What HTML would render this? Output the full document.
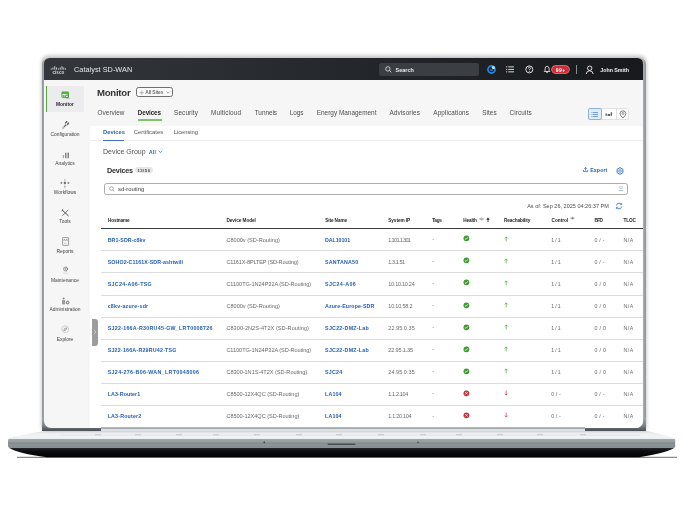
<!DOCTYPE html>
<html><head><meta charset="utf-8"><style>
html,body{margin:0;padding:0;}
body{width:684px;height:513px;background:#fff;position:relative;overflow:hidden;font-family:"Liberation Sans",sans-serif;}
.a{position:absolute;}
.t{position:absolute;white-space:nowrap;line-height:10px;height:10px;}
#scr{will-change:transform;}
svg{position:absolute;overflow:visible;}
</style></head><body>

<svg style="left:0;top:0" width="684" height="513" viewBox="0 0 684 513">
<defs>
<linearGradient id="gblack" x1="0" y1="0" x2="0" y2="1"><stop offset="0" stop-color="#2a2e30"/><stop offset="0.35" stop-color="#0c0e0f"/><stop offset="1" stop-color="#000"/></linearGradient>
<linearGradient id="gmid" x1="0" y1="0" x2="0" y2="1"><stop offset="0" stop-color="#a3a9ad"/><stop offset="0.5" stop-color="#8f969a"/><stop offset="1" stop-color="#858c90"/></linearGradient>
<linearGradient id="gtop" x1="0" y1="0" x2="0" y2="1"><stop offset="0" stop-color="#d7dadc"/><stop offset="0.3" stop-color="#eceef0"/><stop offset="1" stop-color="#f3f5f6"/></linearGradient>
</defs>
<path d="M17 457.3 L677 457.3" stroke="#333" stroke-width="0.9" opacity="0.8"/>
<path d="M8.5 447.4 L674.5 447.4 Q670 452 639 457.2 L47 457.2 Q18 453.5 8.5 447.4 Z" fill="url(#gblack)"/>
<path d="M10 438.6 L673.5 438.6 Q675.2 438.8 675.2 440.6 L675.2 446 Q675.2 447.8 673.5 447.8 L10 447.8 Q8 447.8 8 446 L8 440.6 Q8 438.6 10 438.6 Z" fill="url(#gmid)"/>
<path d="M8 443.3 L675 443.3" stroke="#7d8488" stroke-width="0.7"/>
<path d="M8 438.8 Q10 436.5 45 431 L647 431 Q672 436.5 675 438.8 Z" fill="url(#gtop)"/>
<circle cx="264.3" cy="442.3" r="0.9" fill="#3a3e41"/>
<circle cx="418" cy="442.3" r="0.8" fill="#3a3e41"/>
<rect x="327.5" y="443.5" width="28" height="1.4" rx="0.7" fill="#4a4f52"/>
</svg>

<div class="a" style="left:42px;top:58px;width:603.8px;height:373.1px;border-radius:6px 6px 0 0;background:linear-gradient(90deg,#8e9397,#a9aeb2 0.5%,#a9aeb2 99.5%,#8e9397);box-shadow:0 -2px 4px rgba(0,0,0,0.28);"></div>
<div class="a" style="left:41.5px;top:418px;width:604.5px;height:13.1px;background:linear-gradient(#a4a9ad,#7a7f83 60%,#4a4e51);"></div>
<div class="a" id="scr" style="left:44px;top:58px;width:598.7px;height:369.5px;border-radius:5.5px 5.5px 7px 7px;overflow:hidden;background:#f6f6f6;">
<div class="a" style="left:-44px;top:-58px;width:684px;height:513px;">
<div class="a" style="left:44px;top:58px;width:599px;height:21.6px;background:linear-gradient(90deg,#33373b,#24272b 50%,#17191c);"></div>
<div class="a" style="left:90.2px;top:125.6px;width:553px;height:302px;background:#fff;"></div>
<svg style="left:50px;top:65px" width="18" height="10" viewBox="0 0 18 10"><rect x="0.75" y="3.40" width="0.9" height="1.30" fill="#d4d6d8"/><rect x="2.55" y="2.40" width="0.9" height="2.30" fill="#d4d6d8"/><rect x="4.35" y="1.20" width="0.9" height="3.50" fill="#d4d6d8"/><rect x="6.15" y="2.40" width="0.9" height="2.30" fill="#d4d6d8"/><rect x="7.95" y="3.40" width="0.9" height="1.30" fill="#d4d6d8"/><rect x="9.75" y="2.40" width="0.9" height="2.30" fill="#d4d6d8"/><rect x="11.55" y="1.20" width="0.9" height="3.50" fill="#d4d6d8"/><rect x="13.35" y="2.40" width="0.9" height="2.30" fill="#d4d6d8"/><rect x="15.15" y="3.40" width="0.9" height="1.30" fill="#d4d6d8"/><text x="8.4" y="8.9" font-size="4.5" font-weight="bold" fill="#d4d6d8" text-anchor="middle" font-family="Liberation Sans" letter-spacing="0.1">cisco</text></svg>
<div class="t" style="left:74.00px;top:65.40px;font-size:7.3px;color:#e6e7e8;letter-spacing:0.034px;">Catalyst SD-WAN</div>
<div class="a" style="left:378.7px;top:63.1px;width:100.7px;height:12.9px;border-radius:2.5px;background:#3b3f44;"></div>
<svg style="left:384.5px;top:66px" width="7" height="7" viewBox="0 0 7 7"><circle cx="2.9" cy="2.9" r="2.2" fill="none" stroke="#e8e8e8" stroke-width="0.8"/><path d="M4.5 4.5 L6.3 6.3" stroke="#e8e8e8" stroke-width="0.8"/></svg>
<div class="t" style="left:395.50px;top:65.10px;font-size:5.5px;color:#e9eaeb;font-weight:bold;letter-spacing:0.011px;">Search</div>
<svg style="left:486.5px;top:65px" width="9" height="9" viewBox="0 0 9 9"><circle cx="4.5" cy="4.5" r="3.6" fill="none" stroke="#1f8fe8" stroke-width="1.6"/><circle cx="6.4" cy="2.6" r="1.6" fill="#bfe4ff"/><path d="M3 4.5 a1.5 1.5 0 0 0 3 0" fill="#1f8fe8"/></svg>
<svg style="left:505.5px;top:66px" width="9" height="7" viewBox="0 0 9 7"><rect x="0" y="0.4" width="1.2" height="0.9" fill="#e8e8e8"/><rect x="2.2" y="0.4" width="5.8" height="0.9" fill="#e8e8e8"/><rect x="0" y="2.9" width="1.2" height="0.9" fill="#e8e8e8"/><rect x="2.2" y="2.9" width="5.8" height="0.9" fill="#e8e8e8"/><rect x="0" y="5.4" width="1.2" height="0.9" fill="#e8e8e8"/><rect x="2.2" y="5.4" width="5.8" height="0.9" fill="#e8e8e8"/></svg>
<svg style="left:524.5px;top:65px" width="9" height="9" viewBox="0 0 9 9"><circle cx="4.3" cy="4.4" r="3.5" fill="none" stroke="#ececec" stroke-width="0.9"/><path d="M3.2 3.5 Q3.3 2.3 4.4 2.3 Q5.5 2.4 5.5 3.4 Q5.4 4.2 4.4 4.6 L4.4 5.3" fill="none" stroke="#ececec" stroke-width="0.8"/><circle cx="4.4" cy="6.4" r="0.5" fill="#ececec"/></svg>
<svg style="left:543px;top:65px" width="9" height="9" viewBox="0 0 9 9"><path d="M1.3 6.5 L2.1 5.5 L2.1 3.8 Q2.2 1.3 4.1 1.2 Q6.0 1.3 6.1 3.8 L6.1 5.5 L6.9 6.5 Z" fill="none" stroke="#f0f0f0" stroke-width="0.85" stroke-linejoin="round"/><path d="M3.3 7.4 Q4.1 8.3 4.9 7.4" fill="none" stroke="#f0f0f0" stroke-width="0.8"/></svg>
<div class="a" style="left:552.2px;top:65.6px;width:16.8px;height:7.8px;border-radius:4px;background:#cf2d38;box-shadow:0 0 0 0.7px #f08a8f;"></div>
<div class="t" style="left:555.80px;top:65.30px;font-size:5.0px;color:#fff;font-weight:bold;letter-spacing:0.459px;">99+</div>
<div class="a" style="left:575.6px;top:64.5px;width:0.9px;height:9.5px;background:#8b8e91;"></div>
<svg style="left:584.5px;top:64.5px" width="10" height="10" viewBox="0 0 10 10"><circle cx="4.7" cy="3.2" r="2.2" fill="none" stroke="#f0f0f0" stroke-width="0.9"/><path d="M1.2 9 Q1.6 5.8 4.7 5.8 Q7.8 5.8 8.2 9" fill="none" stroke="#f0f0f0" stroke-width="0.9"/></svg>
<div class="t" style="left:600.30px;top:64.80px;font-size:5.3px;color:#f2f2f2;font-weight:bold;letter-spacing:-0.017px;">John Smith</div>
<div class="a" style="left:45.6px;top:86.4px;width:38.3px;height:25.2px;background:#ececee;"></div>
<div class="a" style="left:45.6px;top:86.4px;width:1.4px;height:25.2px;background:#58a83a;"></div>
<div class="t" style="left:56.02px;top:100.40px;font-size:4.9px;color:#2a2a2a;font-weight:bold;">Monitor</div>
<div class="t" style="left:50.43px;top:129.67px;font-size:4.9px;color:#3f3f3f;">Configuration</div>
<div class="t" style="left:55.20px;top:158.94px;font-size:4.9px;color:#3f3f3f;">Analytics</div>
<div class="t" style="left:53.75px;top:188.21px;font-size:4.9px;color:#3f3f3f;">Workflows</div>
<div class="t" style="left:59.28px;top:217.48px;font-size:4.9px;color:#3f3f3f;">Tools</div>
<div class="t" style="left:56.42px;top:246.75px;font-size:4.9px;color:#3f3f3f;">Reports</div>
<div class="t" style="left:50.97px;top:276.02px;font-size:4.9px;color:#3f3f3f;">Maintenance</div>
<div class="t" style="left:49.48px;top:305.29px;font-size:4.9px;color:#3f3f3f;">Administration</div>
<div class="t" style="left:56.69px;top:334.56px;font-size:4.9px;color:#3f3f3f;">Explore</div>
<svg style="left:60.5px;top:91px" width="10" height="9" viewBox="0 0 10 9"><rect x="0.9" y="1" width="6.6" height="5.6" rx="0.4" fill="none" stroke="#4db03a" stroke-width="1"/><rect x="0.9" y="0.9" width="6.6" height="2" fill="#4db03a"/><rect x="1.6" y="4" width="2" height="2" fill="#66c24f"/><circle cx="6" cy="5.4" r="1.5" fill="#e9e9ea" stroke="#2f7f25" stroke-width="0.9"/><path d="M7 6.5 L8.1 7.6" stroke="#2f7f25" stroke-width="0.9"/></svg>
<svg style="left:60.5px;top:119.8px" width="10" height="10" viewBox="0 0 10 10"><path d="M2.2 7.6 L5.2 4.6" stroke="#555" stroke-width="1.1"/><path d="M4.4 3.6 Q4.2 1.6 6 1.3 L5.6 2.6 L6.6 3.4 L7.8 2.8 Q7.8 4.8 5.6 5" fill="none" stroke="#4a4a4a" stroke-width="0.9"/><circle cx="2.1" cy="8" r="1.2" fill="#c4c4c4"/></svg>
<svg style="left:61.5px;top:151.8px" width="8" height="7" viewBox="0 0 8 7"><rect x="0.8" y="3" width="1.1" height="3.2" fill="#a0a0a0"/><rect x="3.2" y="0.8" width="1.2" height="5.4" fill="#666"/><rect x="5.6" y="0.6" width="1.2" height="5.6" fill="#666"/></svg>
<svg style="left:60.3px;top:179px" width="10" height="9" viewBox="0 0 10 9"><circle cx="4.9" cy="0.9" r="0.6" fill="#888"/><path d="M4.9 2.2 L6.3 3.9 L4.9 5.6 L3.5 3.9 Z" fill="#666"/><path d="M0.4 3.9 L2.4 3.9 M1.4 2.9 L1.4 4.9 M7.4 3.9 L9.4 3.9 M8.4 2.9 L8.4 4.9" stroke="#666" stroke-width="0.7"/><path d="M4.9 6.4 L4.9 7.8" stroke="#999" stroke-width="0.6"/><circle cx="4.9" cy="7.9" r="0.6" fill="#777"/></svg>
<svg style="left:61px;top:208.5px" width="9" height="8" viewBox="0 0 9 8"><path d="M1.2 1 L7.6 7" stroke="#4a4a4a" stroke-width="1"/><path d="M7.4 0.8 L1.4 6.8" stroke="#6a6a6a" stroke-width="0.9"/><path d="M0.6 1.8 L2.2 0.4" stroke="#4a4a4a" stroke-width="1"/></svg>
<svg style="left:61.6px;top:237px" width="8" height="9" viewBox="0 0 8 9"><rect x="0.6" y="0.6" width="6" height="7.8" rx="0.5" fill="none" stroke="#888" stroke-width="0.8"/><path d="M2 4 L2 2.2 L3.6 3.4 L5.2 2.2 L5.2 4" fill="none" stroke="#777" stroke-width="0.6"/><path d="M2 6.2 L5.2 6.2" stroke="#aaa" stroke-width="0.5"/></svg>
<svg style="left:61.5px;top:265.5px" width="8" height="9" viewBox="0 0 8 9"><circle cx="3.6" cy="3" r="1.9" fill="none" stroke="#777" stroke-width="1.1" stroke-dasharray="1 0.4"/><circle cx="3.6" cy="3" r="0.7" fill="#777"/><path d="M1 7.2 L6.2 7.2" stroke="#c8c8c8" stroke-width="0.6"/></svg>
<svg style="left:60.5px;top:296.5px" width="10" height="9" viewBox="0 0 10 9"><circle cx="2.6" cy="1.5" r="1" fill="#888"/><path d="M1.1 3.1 L4.1 3.1 L4.1 7.4 L1.1 7.4 Z" fill="#999"/><circle cx="6.6" cy="5.6" r="1.3" fill="none" stroke="#555" stroke-width="0.9"/></svg>
<svg style="left:60.8px;top:324.8px" width="9" height="9" viewBox="0 0 9 9"><circle cx="4.2" cy="4.2" r="3.4" fill="none" stroke="#b8b8b8" stroke-width="0.6"/><path d="M2.8 5.8 L3.5 3.5 L5.8 2.8 L5 5 Z" fill="none" stroke="#777" stroke-width="0.6"/></svg>
<div class="a" style="left:91.7px;top:318.6px;width:6.8px;height:27.3px;border-radius:0 3px 3px 0;background:#9d9d9d;"></div>
<svg style="left:93px;top:329px" width="4" height="6" viewBox="0 0 4 6"><path d="M1 0.8 L3 3 L1 5.2" fill="none" stroke="#e0e0e0" stroke-width="0.6"/></svg>
<div class="t" style="left:96.90px;top:87.50px;font-size:9.6px;color:#333;font-weight:bold;letter-spacing:-0.232px;">Monitor</div>
<div class="a" style="left:135.5px;top:87.4px;width:37.9px;height:10.1px;box-sizing:border-box;border:0.8px solid #6e6e6e;border-radius:2.5px;background:#fafafa;"></div>
<svg style="left:138.8px;top:89.8px" width="6" height="6" viewBox="0 0 6 6"><path d="M0.6 2.7 L4.8 2.7 M2.7 0.6 L2.7 4.8" stroke="#9a9a9a" stroke-width="0.7"/></svg>
<div class="t" style="left:145.30px;top:88.30px;font-size:4.9px;color:#4a4a4a;letter-spacing:-0.150px;font-weight:bold;opacity:0.8;">All Sites</div>
<svg style="left:165.5px;top:91px" width="4" height="3" viewBox="0 0 4 3"><path d="M0.4 0.6 L2 2.2 L3.6 0.6" fill="none" stroke="#666" stroke-width="0.6"/></svg>
<div class="t" style="left:97.60px;top:107.80px;font-size:6.4px;color:#4d4d4d;letter-spacing:0.033px;">Overview</div>
<div class="t" style="left:137.80px;top:107.80px;font-size:6.3px;color:#262626;font-weight:bold;letter-spacing:-0.103px;">Devices</div>
<div class="t" style="left:174.00px;top:107.80px;font-size:6.4px;color:#4d4d4d;letter-spacing:0.126px;">Security</div>
<div class="t" style="left:211.00px;top:107.80px;font-size:6.4px;color:#4d4d4d;letter-spacing:0.132px;">Multicloud</div>
<div class="t" style="left:254.75px;top:107.80px;font-size:6.4px;color:#4d4d4d;letter-spacing:-0.047px;">Tunnels</div>
<div class="t" style="left:289.75px;top:107.80px;font-size:6.4px;color:#4d4d4d;letter-spacing:-0.043px;">Logs</div>
<div class="t" style="left:316.75px;top:107.80px;font-size:6.4px;color:#4d4d4d;letter-spacing:0.021px;">Energy Management</div>
<div class="t" style="left:389.50px;top:107.80px;font-size:6.4px;color:#4d4d4d;letter-spacing:0.109px;">Advisories</div>
<div class="t" style="left:433.25px;top:107.80px;font-size:6.4px;color:#4d4d4d;letter-spacing:0.113px;">Applications</div>
<div class="t" style="left:482.20px;top:107.80px;font-size:6.4px;color:#4d4d4d;letter-spacing:0.068px;">Sites</div>
<div class="t" style="left:509.40px;top:107.80px;font-size:6.4px;color:#4d4d4d;letter-spacing:0.152px;">Circuits</div>
<div class="a" style="left:137.5px;top:119.4px;width:24.5px;height:1.4px;background:#7fc26a;"></div>
<div class="a" style="left:587.5px;top:108px;width:41.5px;height:12.4px;box-sizing:border-box;border:0.7px solid #e2e2e2;border-radius:2px;background:#fff;"></div>
<div class="a" style="left:587.5px;top:108px;width:14.6px;height:12.4px;box-sizing:border-box;border:0.9px solid #8fb3e0;border-radius:2px;background:#e2ecf9;"></div>
<div class="a" style="left:615.5px;top:108px;width:0.6px;height:12px;background:#e0e0e0;"></div>
<svg style="left:590.5px;top:110.5px" width="8" height="7" viewBox="0 0 8 7"><rect x="0.5" y="1" width="0.9" height="0.8" fill="#5b8fd6"/><rect x="2" y="1" width="5" height="0.8" fill="#5b8fd6"/><rect x="0.5" y="3" width="0.9" height="0.8" fill="#5b8fd6"/><rect x="2" y="3" width="5" height="0.8" fill="#5b8fd6"/><rect x="0.5" y="5" width="0.9" height="0.8" fill="#5b8fd6"/><rect x="2" y="5" width="5" height="0.8" fill="#5b8fd6"/></svg>
<svg style="left:604.5px;top:109.7px" width="8" height="7" viewBox="0 0 8 7"><rect x="0.6" y="3.4" width="1.1" height="2.4" fill="#444"/><rect x="2.6" y="4.1" width="2.6" height="1.7" fill="#444"/><rect x="5.8" y="2.2" width="1.1" height="3.6" fill="#444"/></svg>
<svg style="left:618.5px;top:109.8px" width="8" height="9" viewBox="0 0 8 9"><path d="M3.9 8 Q1 5.6 1 3.5 Q1 0.9 3.9 0.9 Q6.8 0.9 6.8 3.5 Q6.8 5.6 3.9 8 Z" fill="none" stroke="#555" stroke-width="0.75"/><circle cx="3.9" cy="3.5" r="1" fill="none" stroke="#555" stroke-width="0.6"/></svg>
<div class="t" style="left:103.00px;top:127.30px;font-size:5.85px;color:#2b64b4;letter-spacing:-0.018px;font-weight:600;">Devices</div>
<div class="t" style="left:133.70px;top:127.30px;font-size:5.85px;color:#555;letter-spacing:0.022px;">Certificates</div>
<div class="t" style="left:173.70px;top:127.30px;font-size:5.85px;color:#555;letter-spacing:-0.052px;">Licensing</div>
<div class="a" style="left:90.2px;top:140.3px;width:553px;height:0.6px;background:#ececec;"></div>
<div class="a" style="left:102.8px;top:139.7px;width:21.2px;height:1.3px;background:#3d72c2;"></div>
<div class="t" style="left:103.00px;top:146.80px;font-size:7.0px;color:#505050;letter-spacing:-0.018px;">Device Group</div>
<div class="t" style="left:148.90px;top:147.40px;font-size:5.0px;color:#2a64b8;font-weight:bold;letter-spacing:0.305px;">All</div>
<svg style="left:157.6px;top:150.2px" width="5" height="4" viewBox="0 0 5 4"><path d="M0.7 0.8 L2.5 2.6 L4.3 0.8" fill="none" stroke="#2a64b8" stroke-width="0.7"/></svg>
<div class="t" style="left:106.90px;top:165.70px;font-size:7.3px;color:#2f2f2f;font-weight:bold;letter-spacing:-0.217px;">Devices</div>
<div class="a" style="left:134.6px;top:166.9px;width:18.4px;height:6.5px;border-radius:3.3px;background:#e6e6e6;"></div>
<div class="t" style="left:137.40px;top:166.00px;font-size:4.2px;color:#444;font-weight:bold;letter-spacing:0.522px;">13/50</div>
<svg style="left:582.6px;top:167.4px" width="6" height="6" viewBox="0 0 6 6"><path d="M2.6 3.8 L2.6 0.6 M1.3 1.8 L2.6 0.5 L3.9 1.8" fill="none" stroke="#2a64b8" stroke-width="0.75"/><path d="M0.5 2.9 L0.5 4.6 L4.7 4.6 L4.7 2.9" fill="none" stroke="#2a64b8" stroke-width="0.75"/></svg>
<div class="t" style="left:590.30px;top:164.60px;font-size:5.3px;color:#2a64b8;font-weight:bold;letter-spacing:0.043px;">Export</div>
<svg style="left:615.5px;top:166.5px" width="8" height="8" viewBox="0 0 8 8"><path d="M4 0.6 L6.9 2.3 L6.9 5.7 L4 7.4 L1.1 5.7 L1.1 2.3 Z" fill="none" stroke="#3b72c4" stroke-width="1"/><circle cx="4" cy="4" r="1.3" fill="none" stroke="#3b72c4" stroke-width="0.8"/></svg>
<div class="a" style="left:103.9px;top:183.2px;width:524px;height:12.1px;box-sizing:border-box;border:0.8px solid #adadad;border-radius:2.5px;background:#fff;"></div>
<svg style="left:108.5px;top:186.2px" width="6" height="6" viewBox="0 0 6 6"><circle cx="2.5" cy="2.5" r="1.8" fill="none" stroke="#777" stroke-width="0.6"/><path d="M3.8 3.8 L5.3 5.3" stroke="#777" stroke-width="0.6"/></svg>
<div class="t" style="left:118.00px;top:184.40px;font-size:5.9px;color:#3c3c3c;">sd-routing</div>
<svg style="left:617.8px;top:186.2px" width="6" height="6" viewBox="0 0 6 6"><path d="M0.8 1 L5 1 M1.7 2.7 L4.2 2.7 M0.8 4.6 L5 4.6" stroke="#6b93d0" stroke-width="0.55"/></svg>
<div class="t" style="left:527.20px;top:200.90px;font-size:5.5px;color:#4a4a4a;letter-spacing:0.019px;">As of: Sep 26, 2025 04:26:37 PM</div>
<svg style="left:615.3px;top:202.2px" width="8" height="8" viewBox="0 0 8 8"><path d="M1.3 3.4 Q1.8 1.1 4 1.1 Q5.6 1.1 6.4 2.4" fill="none" stroke="#2f74d0" stroke-width="0.85"/><path d="M6.6 0.9 L6.6 2.7 L4.9 2.7" fill="none" stroke="#2f74d0" stroke-width="0.75"/><path d="M6.7 4.6 Q6.2 6.9 4 6.9 Q2.4 6.9 1.6 5.6" fill="none" stroke="#2f74d0" stroke-width="0.85"/><path d="M1.4 7.1 L1.4 5.3 L3.1 5.3" fill="none" stroke="#2f74d0" stroke-width="0.75"/></svg>
<div class="t" style="left:108.00px;top:216.20px;font-size:4.7px;color:#1f1f1f;font-weight:bold;letter-spacing:-0.146px;">Hostname</div>
<div class="t" style="left:226.40px;top:216.20px;font-size:4.7px;color:#1f1f1f;font-weight:bold;letter-spacing:-0.040px;">Device Model</div>
<div class="t" style="left:325.30px;top:216.20px;font-size:4.7px;color:#1f1f1f;font-weight:bold;letter-spacing:-0.116px;">Site Name</div>
<div class="t" style="left:388.20px;top:216.20px;font-size:4.7px;color:#1f1f1f;font-weight:bold;letter-spacing:-0.046px;">System IP</div>
<div class="t" style="left:432.20px;top:216.20px;font-size:4.7px;color:#1f1f1f;font-weight:bold;letter-spacing:-0.340px;">Tags</div>
<div class="t" style="left:463.20px;top:216.20px;font-size:4.7px;color:#1f1f1f;font-weight:bold;letter-spacing:-0.133px;">Health</div>
<div class="t" style="left:504.00px;top:216.20px;font-size:4.7px;color:#1f1f1f;font-weight:bold;letter-spacing:-0.108px;">Reachability</div>
<div class="t" style="left:551.50px;top:216.20px;font-size:4.7px;color:#1f1f1f;font-weight:bold;letter-spacing:0.015px;">Control</div>
<div class="t" style="left:594.60px;top:216.20px;font-size:4.7px;color:#1f1f1f;font-weight:bold;letter-spacing:-0.630px;">BFD</div>
<div class="t" style="left:623.60px;top:216.20px;font-size:4.7px;color:#1f1f1f;font-weight:bold;letter-spacing:-0.131px;">TLOC</div>
<svg style="left:479.3px;top:216.6px" width="5" height="4" viewBox="0 0 5 4"><path d="M0.3 2 Q2.5 0 4.7 2 Q2.5 4 0.3 2 Z" fill="none" stroke="#666" stroke-width="0.45"/><circle cx="2.5" cy="2" r="0.6" fill="#666"/></svg>
<svg style="left:486px;top:216.8px" width="4" height="6" viewBox="0 0 4 6"><path d="M2 5 L2 1.6" stroke="#222" stroke-width="0.8"/><path d="M0.3 2.7 L2 0.5 L3.7 2.7 Z" fill="#222"/></svg>
<svg style="left:570px;top:216.4px" width="5" height="5" viewBox="0 0 5 5"><path d="M0.6 2.2 Q2.5 0.3 4.4 2.2 Q2.5 4.1 0.6 2.2 Z" fill="none" stroke="#555" stroke-width="0.45"/><circle cx="2.5" cy="2.2" r="0.6" fill="#555"/></svg>
<div class="a" style="left:101px;top:227.8px;width:542px;height:0.9px;background:#3a3a3a;"></div>
<div class="t" style="left:107.70px;top:235.00px;font-size:5.3px;color:#2560b6;font-weight:bold;letter-spacing:0.072px;">BR1-SDR-c8kv</div>
<div class="t" style="left:226.40px;top:235.00px;font-size:5.6px;color:#6a6a6a;">C8000v (SD-Routing)</div>
<div class="t" style="left:325.10px;top:235.00px;font-size:5.3px;color:#2560b6;font-weight:bold;letter-spacing:-0.076px;">DAL10101</div>
<div class="t" style="left:388.30px;top:235.00px;font-size:5.5px;color:#6a6a6a;letter-spacing:-0.646px;">1.101.1.301</div>
<div class="t" style="left:432.30px;top:234.20px;font-size:5.5px;color:#777;">-</div>
<svg style="left:463.2px;top:235.40px" width="7" height="7" viewBox="0 0 7 7"><circle cx="3.4" cy="3.3" r="2.9" fill="#3d9a2e"/><path d="M1.9 3.4 L3 4.4 L4.9 2.3" fill="none" stroke="#fff" stroke-width="0.8"/></svg>
<svg style="left:504.3px;top:236.00px" width="5" height="6" viewBox="0 0 5 6"><path d="M2.2 5.4 L2.2 1" stroke="#4ea33a" stroke-width="0.7"/><path d="M0.8 2.4 L2.2 0.8 L3.6 2.4" fill="none" stroke="#4ea33a" stroke-width="0.7"/></svg>
<div class="t" style="left:551.20px;top:235.00px;font-size:5.2px;color:#6a6a6a;letter-spacing:-0.155px;">1 / 1</div>
<div class="t" style="left:594.50px;top:235.00px;font-size:5.2px;color:#6a6a6a;letter-spacing:0.236px;">0 / -</div>
<div class="t" style="left:623.40px;top:235.00px;font-size:5.2px;color:#6a6a6a;letter-spacing:0.616px;">N/A</div>
<div class="a" style="left:101px;top:250.26px;width:542px;height:1px;background:#dcdcdc;"></div>
<div class="t" style="left:107.70px;top:257.04px;font-size:5.3px;color:#2560b6;font-weight:bold;letter-spacing:0.086px;">SOHO2-C1161X-SDR-ashtwill</div>
<div class="t" style="left:226.40px;top:257.04px;font-size:5.6px;color:#6a6a6a;letter-spacing:-0.158px;">C1161X-8PLTEP (SD-Routing)</div>
<div class="t" style="left:325.10px;top:257.04px;font-size:5.3px;color:#2560b6;font-weight:bold;letter-spacing:0.211px;">SANTANA50</div>
<div class="t" style="left:388.30px;top:257.04px;font-size:5.5px;color:#6a6a6a;letter-spacing:-0.440px;">1.3.1.51</div>
<div class="t" style="left:432.30px;top:256.24px;font-size:5.5px;color:#777;">-</div>
<svg style="left:463.2px;top:257.44px" width="7" height="7" viewBox="0 0 7 7"><circle cx="3.4" cy="3.3" r="2.9" fill="#3d9a2e"/><path d="M1.9 3.4 L3 4.4 L4.9 2.3" fill="none" stroke="#fff" stroke-width="0.8"/></svg>
<svg style="left:504.3px;top:258.04px" width="5" height="6" viewBox="0 0 5 6"><path d="M2.2 5.4 L2.2 1" stroke="#4ea33a" stroke-width="0.7"/><path d="M0.8 2.4 L2.2 0.8 L3.6 2.4" fill="none" stroke="#4ea33a" stroke-width="0.7"/></svg>
<div class="t" style="left:551.20px;top:257.04px;font-size:5.2px;color:#6a6a6a;letter-spacing:-0.155px;">1 / 1</div>
<div class="t" style="left:594.50px;top:257.04px;font-size:5.2px;color:#6a6a6a;letter-spacing:0.236px;">0 / -</div>
<div class="t" style="left:623.40px;top:257.04px;font-size:5.2px;color:#6a6a6a;letter-spacing:0.616px;">N/A</div>
<div class="a" style="left:101px;top:272.42px;width:542px;height:1px;background:#dcdcdc;"></div>
<div class="t" style="left:107.70px;top:279.08px;font-size:5.3px;color:#2560b6;font-weight:bold;letter-spacing:0.304px;">SJC24-A06-TSG</div>
<div class="t" style="left:226.40px;top:279.08px;font-size:5.6px;color:#6a6a6a;letter-spacing:-0.066px;">C1100TG-1N24P32A (SD-Routing)</div>
<div class="t" style="left:325.10px;top:279.08px;font-size:5.3px;color:#2560b6;font-weight:bold;letter-spacing:0.363px;">SJC24-A06</div>
<div class="t" style="left:388.30px;top:279.08px;font-size:5.5px;color:#6a6a6a;letter-spacing:-0.266px;">10.10.10.24</div>
<div class="t" style="left:432.30px;top:278.28px;font-size:5.5px;color:#777;">-</div>
<svg style="left:463.2px;top:279.48px" width="7" height="7" viewBox="0 0 7 7"><circle cx="3.4" cy="3.3" r="2.9" fill="#3d9a2e"/><path d="M1.9 3.4 L3 4.4 L4.9 2.3" fill="none" stroke="#fff" stroke-width="0.8"/></svg>
<svg style="left:504.3px;top:280.08px" width="5" height="6" viewBox="0 0 5 6"><path d="M2.2 5.4 L2.2 1" stroke="#4ea33a" stroke-width="0.7"/><path d="M0.8 2.4 L2.2 0.8 L3.6 2.4" fill="none" stroke="#4ea33a" stroke-width="0.7"/></svg>
<div class="t" style="left:551.20px;top:279.08px;font-size:5.2px;color:#6a6a6a;letter-spacing:-0.155px;">1 / 1</div>
<div class="t" style="left:594.50px;top:279.08px;font-size:5.2px;color:#6a6a6a;letter-spacing:0.345px;">0 / 0</div>
<div class="t" style="left:623.40px;top:279.08px;font-size:5.2px;color:#6a6a6a;letter-spacing:0.616px;">N/A</div>
<div class="a" style="left:101px;top:294.58px;width:542px;height:1px;background:#dcdcdc;"></div>
<div class="t" style="left:107.70px;top:301.12px;font-size:5.3px;color:#2560b6;font-weight:bold;letter-spacing:0.237px;">c8kv-azure-sdr</div>
<div class="t" style="left:226.40px;top:301.12px;font-size:5.6px;color:#6a6a6a;">C8000v (SD-Routing)</div>
<div class="t" style="left:325.10px;top:301.12px;font-size:5.3px;color:#2560b6;font-weight:bold;letter-spacing:0.100px;">Azure-Europe-SDR</div>
<div class="t" style="left:388.30px;top:301.12px;font-size:5.5px;color:#6a6a6a;letter-spacing:-0.200px;">10.10.58.2</div>
<div class="t" style="left:432.30px;top:300.32px;font-size:5.5px;color:#777;">-</div>
<svg style="left:463.2px;top:301.52px" width="7" height="7" viewBox="0 0 7 7"><circle cx="3.4" cy="3.3" r="2.9" fill="#3d9a2e"/><path d="M1.9 3.4 L3 4.4 L4.9 2.3" fill="none" stroke="#fff" stroke-width="0.8"/></svg>
<svg style="left:504.3px;top:302.12px" width="5" height="6" viewBox="0 0 5 6"><path d="M2.2 5.4 L2.2 1" stroke="#4ea33a" stroke-width="0.7"/><path d="M0.8 2.4 L2.2 0.8 L3.6 2.4" fill="none" stroke="#4ea33a" stroke-width="0.7"/></svg>
<div class="t" style="left:551.20px;top:301.12px;font-size:5.2px;color:#6a6a6a;letter-spacing:-0.155px;">1 / 1</div>
<div class="t" style="left:594.50px;top:301.12px;font-size:5.2px;color:#6a6a6a;letter-spacing:0.345px;">0 / 0</div>
<div class="t" style="left:623.40px;top:301.12px;font-size:5.2px;color:#6a6a6a;letter-spacing:0.616px;">N/A</div>
<div class="a" style="left:101px;top:316.74px;width:542px;height:1px;background:#dcdcdc;"></div>
<div class="t" style="left:107.70px;top:323.16px;font-size:5.3px;color:#2560b6;font-weight:bold;letter-spacing:0.273px;">SJ22-166A-R30RU45-GW_LRT0008726</div>
<div class="t" style="left:226.40px;top:323.16px;font-size:5.6px;color:#6a6a6a;letter-spacing:0.028px;">C8300-2N2S-4T2X (SD-Routing)</div>
<div class="t" style="left:325.10px;top:323.16px;font-size:5.3px;color:#2560b6;font-weight:bold;letter-spacing:0.255px;">SJC22-DMZ-Lab</div>
<div class="t" style="left:388.30px;top:323.16px;font-size:5.5px;color:#6a6a6a;letter-spacing:0.045px;">22.95.0.35</div>
<div class="t" style="left:432.30px;top:322.36px;font-size:5.5px;color:#777;">-</div>
<svg style="left:463.2px;top:323.56px" width="7" height="7" viewBox="0 0 7 7"><circle cx="3.4" cy="3.3" r="2.9" fill="#3d9a2e"/><path d="M1.9 3.4 L3 4.4 L4.9 2.3" fill="none" stroke="#fff" stroke-width="0.8"/></svg>
<svg style="left:504.3px;top:324.16px" width="5" height="6" viewBox="0 0 5 6"><path d="M2.2 5.4 L2.2 1" stroke="#4ea33a" stroke-width="0.7"/><path d="M0.8 2.4 L2.2 0.8 L3.6 2.4" fill="none" stroke="#4ea33a" stroke-width="0.7"/></svg>
<div class="t" style="left:551.20px;top:323.16px;font-size:5.2px;color:#6a6a6a;letter-spacing:-0.155px;">1 / 1</div>
<div class="t" style="left:594.50px;top:323.16px;font-size:5.2px;color:#6a6a6a;letter-spacing:0.345px;">0 / 0</div>
<div class="t" style="left:623.40px;top:323.16px;font-size:5.2px;color:#6a6a6a;letter-spacing:0.616px;">N/A</div>
<div class="a" style="left:101px;top:338.90px;width:542px;height:1px;background:#dcdcdc;"></div>
<div class="t" style="left:107.70px;top:345.20px;font-size:5.3px;color:#2560b6;font-weight:bold;letter-spacing:0.214px;">SJ22-166A-R29RU42-TSG</div>
<div class="t" style="left:226.40px;top:345.20px;font-size:5.6px;color:#6a6a6a;letter-spacing:-0.066px;">C1100TG-1N24P32A (SD-Routing)</div>
<div class="t" style="left:325.10px;top:345.20px;font-size:5.3px;color:#2560b6;font-weight:bold;letter-spacing:0.255px;">SJC22-DMZ-Lab</div>
<div class="t" style="left:388.30px;top:345.20px;font-size:5.5px;color:#6a6a6a;letter-spacing:-0.133px;">22.95.1.35</div>
<div class="t" style="left:432.30px;top:344.40px;font-size:5.5px;color:#777;">-</div>
<svg style="left:463.2px;top:345.60px" width="7" height="7" viewBox="0 0 7 7"><circle cx="3.4" cy="3.3" r="2.9" fill="#3d9a2e"/><path d="M1.9 3.4 L3 4.4 L4.9 2.3" fill="none" stroke="#fff" stroke-width="0.8"/></svg>
<svg style="left:504.3px;top:346.20px" width="5" height="6" viewBox="0 0 5 6"><path d="M2.2 5.4 L2.2 1" stroke="#4ea33a" stroke-width="0.7"/><path d="M0.8 2.4 L2.2 0.8 L3.6 2.4" fill="none" stroke="#4ea33a" stroke-width="0.7"/></svg>
<div class="t" style="left:551.20px;top:345.20px;font-size:5.2px;color:#6a6a6a;letter-spacing:-0.155px;">1 / 1</div>
<div class="t" style="left:594.50px;top:345.20px;font-size:5.2px;color:#6a6a6a;letter-spacing:0.345px;">0 / 0</div>
<div class="t" style="left:623.40px;top:345.20px;font-size:5.2px;color:#6a6a6a;letter-spacing:0.616px;">N/A</div>
<div class="a" style="left:101px;top:361.06px;width:542px;height:1px;background:#dcdcdc;"></div>
<div class="t" style="left:107.70px;top:367.24px;font-size:5.3px;color:#2560b6;font-weight:bold;letter-spacing:0.339px;">SJ24-276-B06-WAN_LRT0048006</div>
<div class="t" style="left:226.40px;top:367.24px;font-size:5.6px;color:#6a6a6a;letter-spacing:-0.032px;">C8300-1N1S-4T2X (SD-Routing)</div>
<div class="t" style="left:325.10px;top:367.24px;font-size:5.3px;color:#2560b6;font-weight:bold;letter-spacing:0.224px;">SJC24</div>
<div class="t" style="left:388.30px;top:367.24px;font-size:5.5px;color:#6a6a6a;letter-spacing:0.045px;">24.95.0.35</div>
<div class="t" style="left:432.30px;top:366.44px;font-size:5.5px;color:#777;">-</div>
<svg style="left:463.2px;top:367.64px" width="7" height="7" viewBox="0 0 7 7"><circle cx="3.4" cy="3.3" r="2.9" fill="#3d9a2e"/><path d="M1.9 3.4 L3 4.4 L4.9 2.3" fill="none" stroke="#fff" stroke-width="0.8"/></svg>
<svg style="left:504.3px;top:368.24px" width="5" height="6" viewBox="0 0 5 6"><path d="M2.2 5.4 L2.2 1" stroke="#4ea33a" stroke-width="0.7"/><path d="M0.8 2.4 L2.2 0.8 L3.6 2.4" fill="none" stroke="#4ea33a" stroke-width="0.7"/></svg>
<div class="t" style="left:551.20px;top:367.24px;font-size:5.2px;color:#6a6a6a;letter-spacing:-0.155px;">1 / 1</div>
<div class="t" style="left:594.50px;top:367.24px;font-size:5.2px;color:#6a6a6a;letter-spacing:0.345px;">0 / 0</div>
<div class="t" style="left:623.40px;top:367.24px;font-size:5.2px;color:#6a6a6a;letter-spacing:0.616px;">N/A</div>
<div class="a" style="left:101px;top:383.22px;width:542px;height:1px;background:#dcdcdc;"></div>
<div class="t" style="left:107.70px;top:389.28px;font-size:5.3px;color:#2560b6;font-weight:bold;letter-spacing:0.070px;">LA3-Router1</div>
<div class="t" style="left:226.40px;top:389.28px;font-size:5.6px;color:#6a6a6a;letter-spacing:-0.045px;">C8500-12X4QC (SD-Routing)</div>
<div class="t" style="left:325.10px;top:389.28px;font-size:5.3px;color:#2560b6;font-weight:bold;letter-spacing:0.123px;">LA104</div>
<div class="t" style="left:388.30px;top:389.28px;font-size:5.5px;color:#6a6a6a;letter-spacing:-0.380px;">1.1.2.104</div>
<div class="t" style="left:432.30px;top:388.48px;font-size:5.5px;color:#777;">-</div>
<svg style="left:463.2px;top:389.68px" width="7" height="7" viewBox="0 0 7 7"><circle cx="3.4" cy="3.3" r="2.9" fill="#c52f3a"/><path d="M2.2 2.1 L4.6 4.5 M4.6 2.1 L2.2 4.5" fill="none" stroke="#fff" stroke-width="0.8"/></svg>
<svg style="left:504.3px;top:390.28px" width="5" height="6" viewBox="0 0 5 6"><path d="M2.2 0.6 L2.2 5" stroke="#d03a44" stroke-width="0.7"/><path d="M0.8 3.6 L2.2 5.2 L3.6 3.6" fill="none" stroke="#d03a44" stroke-width="0.7"/></svg>
<div class="t" style="left:551.20px;top:389.28px;font-size:5.2px;color:#6a6a6a;letter-spacing:0.136px;">0 / -</div>
<div class="t" style="left:594.50px;top:389.28px;font-size:5.2px;color:#6a6a6a;letter-spacing:0.236px;">0 / -</div>
<div class="t" style="left:623.40px;top:389.28px;font-size:5.2px;color:#6a6a6a;letter-spacing:0.616px;">N/A</div>
<div class="a" style="left:101px;top:405.38px;width:542px;height:1px;background:#dcdcdc;"></div>
<div class="t" style="left:107.70px;top:411.32px;font-size:5.3px;color:#2560b6;font-weight:bold;letter-spacing:0.170px;">LA3-Router2</div>
<div class="t" style="left:226.40px;top:411.32px;font-size:5.6px;color:#6a6a6a;letter-spacing:-0.045px;">C8500-12X4QC (SD-Routing)</div>
<div class="t" style="left:325.10px;top:411.32px;font-size:5.3px;color:#2560b6;font-weight:bold;letter-spacing:0.123px;">LA104</div>
<div class="t" style="left:388.30px;top:411.32px;font-size:5.5px;color:#6a6a6a;letter-spacing:-0.311px;">1.1.20.104</div>
<div class="t" style="left:432.30px;top:410.52px;font-size:5.5px;color:#777;">-</div>
<svg style="left:463.2px;top:411.72px" width="7" height="7" viewBox="0 0 7 7"><circle cx="3.4" cy="3.3" r="2.9" fill="#c52f3a"/><path d="M2.2 2.1 L4.6 4.5 M4.6 2.1 L2.2 4.5" fill="none" stroke="#fff" stroke-width="0.8"/></svg>
<svg style="left:504.3px;top:412.32px" width="5" height="6" viewBox="0 0 5 6"><path d="M2.2 0.6 L2.2 5" stroke="#d03a44" stroke-width="0.7"/><path d="M0.8 3.6 L2.2 5.2 L3.6 3.6" fill="none" stroke="#d03a44" stroke-width="0.7"/></svg>
<div class="t" style="left:551.20px;top:411.32px;font-size:5.2px;color:#6a6a6a;letter-spacing:0.136px;">0 / -</div>
<div class="t" style="left:594.50px;top:411.32px;font-size:5.2px;color:#6a6a6a;letter-spacing:0.236px;">0 / -</div>
<div class="t" style="left:623.40px;top:411.32px;font-size:5.2px;color:#6a6a6a;letter-spacing:0.616px;">N/A</div>
</div></div>
<div class="a" style="left:101px;top:426.8px;width:484px;height:2.2px;background:linear-gradient(#b9bcbf,#9fa3a6);"></div>
<div class="a" style="left:101px;top:429px;width:484px;height:2.2px;background:#dfe2e4;"></div>
<svg style="left:0;top:0" width="684" height="513"><path d="M95 434.8 L101 434.8" stroke="#9a9ea1" stroke-width="0.6"/><path d="M135 434.8 L141 434.8" stroke="#9a9ea1" stroke-width="0.6"/><path d="M176 434.8 L182 434.8" stroke="#9a9ea1" stroke-width="0.6"/><path d="M213 434.8 L219 434.8" stroke="#9a9ea1" stroke-width="0.6"/><path d="M254 434.8 L260 434.8" stroke="#9a9ea1" stroke-width="0.6"/><path d="M296 434.8 L302 434.8" stroke="#9a9ea1" stroke-width="0.6"/><path d="M336 434.8 L342 434.8" stroke="#9a9ea1" stroke-width="0.6"/><path d="M378 434.8 L384 434.8" stroke="#9a9ea1" stroke-width="0.6"/><path d="M420 434.8 L426 434.8" stroke="#9a9ea1" stroke-width="0.6"/><path d="M456 434.8 L462 434.8" stroke="#9a9ea1" stroke-width="0.6"/><path d="M497 434.8 L503 434.8" stroke="#9a9ea1" stroke-width="0.6"/><path d="M537 434.8 L543 434.8" stroke="#9a9ea1" stroke-width="0.6"/><path d="M580 434.8 L586 434.8" stroke="#9a9ea1" stroke-width="0.6"/><path d="M60 435.2 L640 435.2" stroke="#d6d9db" stroke-width="0.4"/></svg>
</body></html>
